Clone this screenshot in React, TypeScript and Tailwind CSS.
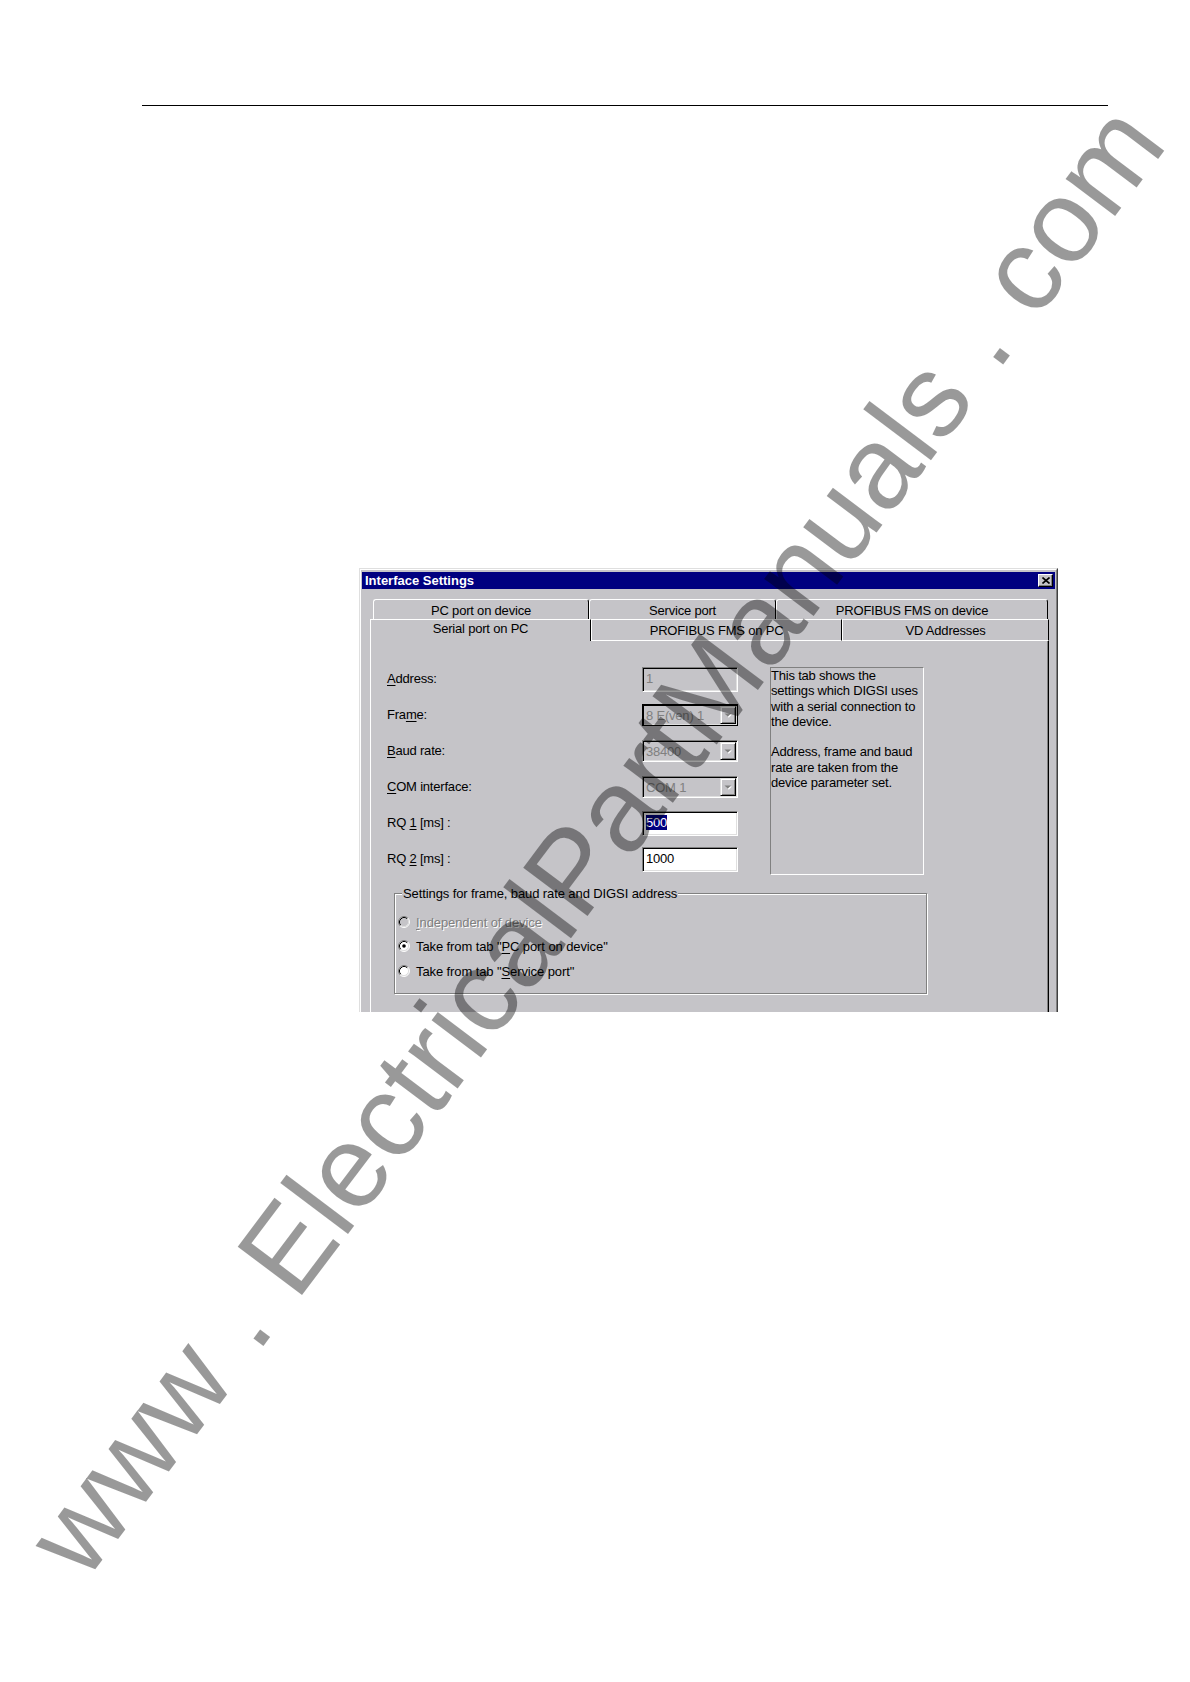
import React from "react";

const FONT = "font-['Liberation_Sans',Arial,sans-serif]";

function U({ children }: { children: React.ReactNode }) {
  return <span className="underline decoration-1 underline-offset-[2px]">{children}</span>;
}

function Radio({ checked, disabled }: { checked?: boolean; disabled?: boolean }) {
  return (
    <svg width="12" height="12" viewBox="0 0 12 12" className="shrink-0">
      <circle cx="6" cy="6" r="5" fill={disabled ? "#c5c4c8" : "#ffffff"} />
      <path d="M2.11 9.89 A5.5 5.5 0 0 1 9.89 2.11" stroke="#808080" fill="none" />
      <path d="M9.89 2.11 A5.5 5.5 0 0 1 2.11 9.89" stroke="#ffffff" fill="none" />
      <path d="M2.82 9.18 A4.5 4.5 0 0 1 9.18 2.82" stroke="#000000" fill="none" />
      <path d="M9.18 2.82 A4.5 4.5 0 0 1 2.82 9.18" stroke="#dfdfdf" fill="none" />
      {checked && <circle cx="6" cy="6" r="1.8" fill="#000000" />}
    </svg>
  );
}

function DropButton() {
  return (
    <div className="w-[16px] shrink-0 bg-[#c5c4c8] border border-t-[#dfdfdf] border-l-[#dfdfdf] border-b-black border-r-black shadow-[inset_1px_1px_0_#ffffff,inset_-1px_-1px_0_#808080] flex items-center justify-center">
      <svg width="8" height="5" viewBox="0 0 8 5">
        <polygon points="1.5,1.5 8,1.5 4.75,4.75" fill="#ffffff" />
        <polygon points="0.5,0.5 7,0.5 3.75,3.75" fill="#808080" />
      </svg>
    </div>
  );
}

function Combo({ value, focus }: { value: string; focus?: boolean }) {
  const border = focus
    ? "border-black"
    : "border-t-[#808080] border-l-[#808080] border-b-white border-r-white";
  return (
    <div
      className={
        "w-[96px] h-[22px] border p-[1px] flex items-stretch bg-[#c5c4c8] shadow-[inset_1px_1px_0_#000000,inset_-1px_-1px_0_#dfdfdf] " +
        border
      }
    >
      <div className="flex-1 flex items-center pl-[2px] text-[#808080] overflow-hidden whitespace-nowrap">
        {value}
      </div>
      <DropButton />
    </div>
  );
}

function TextBox({
  children,
  disabled,
}: {
  children: React.ReactNode;
  disabled?: boolean;
}) {
  return (
    <div
      className={
        "w-[96px] h-[25px] border border-t-[#808080] border-l-[#808080] border-b-white border-r-white shadow-[inset_1px_1px_0_#000000,inset_-1px_-1px_0_#dfdfdf] flex items-start pt-[3px] pl-[3px] whitespace-nowrap " +
        (disabled ? "bg-[#c5c4c8] text-[#808080]" : "bg-white text-black")
      }
    >
      {children}
    </div>
  );
}

function Row({ label, children }: { label: React.ReactNode; children: React.ReactNode }) {
  return (
    <div className="h-[36px] flex items-center">
      <div className="w-[255px] -mt-[2px]">{label}</div>
      <div className="w-[96px] flex items-center">{children}</div>
    </div>
  );
}

export default function App() {
  const tab1 =
    "h-[20px] border-t border-l border-white border-r border-r-black rounded-tl-[3px] rounded-tr-[3px] text-center pt-[3px] whitespace-nowrap";
  const tab2 =
    "h-[22px] border-t border-l border-b border-white border-r border-r-black text-center pt-[3px] whitespace-nowrap";
  return (
    <div
      className={
        "relative w-[1190px] h-[1682px] bg-white overflow-hidden text-black text-[13px] leading-[15px] tracking-[-0.2px] " +
        FONT
      }
    >
      {/* header rule */}
      <div className="pt-[105px] pl-[142px]">
        <div className="w-[966px] h-px bg-black" />
      </div>

      {/* dialog */}
      <div className="ml-[359px] mt-[462px] w-[699px] h-[444px] bg-[#c5c4c8] border-l border-t border-[#dfdfdf] border-r border-r-[#404040] flex flex-col overflow-hidden">
        <div className="flex-1 min-h-0 flex flex-col border-l border-t border-white border-r border-r-[#808080] px-[1px] pt-[2px]">
          {/* title bar */}
          <div className="h-[17px] shrink-0 bg-[#000080] flex items-center justify-between pl-[3px] pr-[2px]">
            <span className="text-white font-bold text-[13px] leading-[17px] tracking-[0px]">
              Interface Settings
            </span>
            <div className="w-[15px] h-[13px] bg-[#c5c4c8] border border-t-white border-l-white border-b-black border-r-black shadow-[inset_-1px_-1px_0_#808080] flex items-center justify-center">
              <svg width="8" height="7" viewBox="0 0 8 7">
                <path d="M0.5 0.5 L7.5 6.5 M7.5 0.5 L0.5 6.5" stroke="#000000" strokeWidth="1.6" />
              </svg>
            </div>
          </div>

          {/* tab control */}
          <div className="flex-1 min-h-0 flex flex-col ml-[8px] mr-[6px] mt-[10px]">
            <div className="flex ml-[3px] mr-[1px]">
              <div className={tab1 + " w-[216px]"}>PC port on device</div>
              <div className={tab1 + " w-[187px]"}>Service port</div>
              <div className={tab1 + " w-[272px]"}>PROFIBUS FMS on device</div>
            </div>
            <div className="flex">
              <div className="w-[221px] h-[22px] border-t border-l border-white border-r border-r-black text-center pt-[1px] whitespace-nowrap">
                Serial port on PC
              </div>
              <div className={tab2 + " w-[251px]"}>PROFIBUS FMS on PC</div>
              <div className={tab2 + " w-[207px]"}>VD Addresses</div>
            </div>

            {/* panel */}
            <div className="flex-1 border-l border-white border-r border-r-black shadow-[inset_-1px_0_0_#808080] pl-[16px] pt-[20px]">
              <div className="flex items-start">
                <div className="flex flex-col">
                  <Row label={<><U>A</U>ddress:</>}>
                    <TextBox disabled>1</TextBox>
                  </Row>
                  <Row label={<>Fra<U>m</U>e:</>}>
                    <Combo value="8 E(ven) 1" focus />
                  </Row>
                  <Row label={<><U>B</U>aud rate:</>}>
                    <Combo value="38400" />
                  </Row>
                  <Row label={<><U>C</U>OM interface:</>}>
                    <Combo value="COM 1" />
                  </Row>
                  <Row label={<>RQ <U>1</U> [ms] :</>}>
                    <TextBox>
                      <span className="bg-[#000080] text-white">500</span>
                    </TextBox>
                  </Row>
                  <Row label={<>RQ <U>2</U> [ms] :</>}>
                    <TextBox>1000</TextBox>
                  </Row>
                </div>
                <div className="ml-[32px] mt-[6px] w-[154px] h-[208px] border border-t-[#808080] border-l-[#808080] border-b-white border-r-white leading-[15.3px] whitespace-nowrap pl-[0px]">
                  This tab shows the
                  <br />
                  settings which DIGSI uses
                  <br />
                  with a serial connection to
                  <br />
                  the device.
                  <br />
                  <br />
                  Address, frame and baud
                  <br />
                  rate are taken from the
                  <br />
                  device parameter set.
                </div>
              </div>

              <fieldset className="ml-[7px] mt-[9px] w-[533px] h-[108px] border border-[#808080] shadow-[inset_1px_1px_0_#ffffff,1px_1px_0_#ffffff] pl-[3px] pt-[9px] tracking-[-0.1px]">
                <legend className="ml-[4px] px-[1px] bg-[#c5c4c8]">
                  Settings for frame, baud rate and DIGSI address
                </legend>
                <div className="h-[24px] flex items-center gap-[6px]">
                  <Radio disabled />
                  <span className="text-[#808080] [text-shadow:1px_1px_0_#ffffff]">
                    <U>I</U>ndependent of device
                  </span>
                </div>
                <div className="h-[24px] flex items-center gap-[6px]">
                  <Radio checked />
                  <span>
                    Take from tab "<U>P</U>C port on device"
                  </span>
                </div>
                <div className="h-[24px] mt-[1px] flex items-center gap-[6px]">
                  <Radio />
                  <span>
                    Take from tab "<U>S</U>ervice port"
                  </span>
                </div>
              </fieldset>
            </div>
          </div>
        </div>
      </div>

      {/* watermark */}
      <div className="pointer-events-none absolute left-[85px] top-[1484px] origin-[0_99px] rotate-[-53deg] text-[117px] leading-none tracking-[0px] whitespace-nowrap text-black/40 font-['Liberation_Sans',Arial,sans-serif]">
        www . ElectricalPartManuals . com
      </div>
    </div>
  );
}
